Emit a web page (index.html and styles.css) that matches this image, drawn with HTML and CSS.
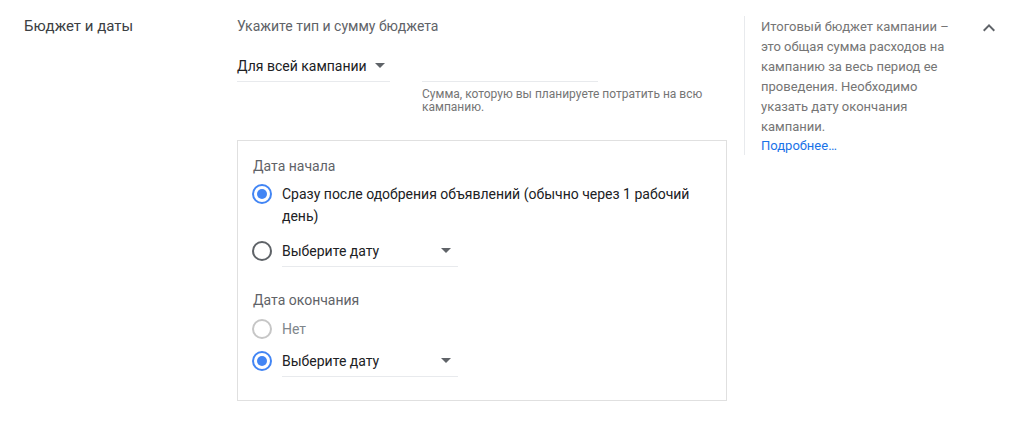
FILE: index.html
```html
<!DOCTYPE html>
<html lang="ru">
<head>
<meta charset="utf-8">
<link rel="stylesheet" href="styles.css">
</head>
<body>
<div class="section">
  <div class="label">Бюджет и даты</div>
  <div class="main">
    <div class="title">Укажите тип и сумму бюджета</div>
    <div class="budget-row">
      <div class="select type-select">
        <span>Для всей кампании</span>
        <span class="arrow"></span>
      </div>
      <div class="amount">
        <div class="amount-input"></div>
        <div class="hint">Сумма, которую вы планируете потратить на всю кампанию.</div>
      </div>
    </div>
    <div class="dates">
      <div class="group-label">Дата начала</div>
      <div class="radio-row multi">
        <span class="radio checked"></span>
        <span class="radio-text">Сразу после одобрения объявлений (обычно через 1 рабочий день)</span>
      </div>
      <div class="radio-row field-row">
        <span class="radio"></span>
        <div class="select date-select">
          <span>Выберите дату</span>
          <span class="arrow"></span>
        </div>
      </div>
      <div class="group-label second">Дата окончания</div>
      <div class="radio-row">
        <span class="radio disabled"></span>
        <span class="radio-text muted">Нет</span>
      </div>
      <div class="radio-row field-row last">
        <span class="radio checked"></span>
        <div class="select date-select">
          <span>Выберите дату</span>
          <span class="arrow"></span>
        </div>
      </div>
    </div>
  </div>
  <div class="help">
    <p>Итоговый бюджет кампании – это общая сумма расходов на кампанию за весь период ее проведения. Необходимо указать дату окончания кампании.</p>
    <a class="more" href="#">Подробнее…</a>
  </div>
  <div class="toggle">
    <svg width="12" height="8" viewBox="0 0 12 8"><path d="M1.4 7.4 6 2.8l4.6 4.6L12 6 6 0 0 6z" fill="#5f6368"/></svg>
  </div>
</div>
</body>
</html>
```
FILE: styles.css
```css
html, body {
  margin: 0;
  padding: 0;
  background: #fff;
  font-family: Roboto, "Noto Sans", Arial, sans-serif;
  color: #202124;
}

.section {
  display: flex;
  align-items: flex-start;
  padding: 16px 0 0 24px;
}

.label {
  width: 213px;
  font-size: 15px;
  line-height: 20px;
  color: #3c4043;
}

.main {
  width: 490px;
}

.title {
  font-size: 14px;
  line-height: 20px;
  color: #5f6368;
}

.budget-row {
  display: flex;
  align-items: flex-start;
  margin-top: 14px;
}

.select {
  display: flex;
  align-items: center;
  justify-content: space-between;
  height: 31px;
  border-bottom: 1px solid #e8eaed;
  font-size: 14px;
  color: #202124;
}

.arrow {
  width: 0;
  height: 0;
  border-left: 5px solid transparent;
  border-right: 5px solid transparent;
  border-top: 5px solid #5f6368;
}

.type-select {
  width: 153px;
  justify-content: flex-start;
  gap: 8px;
}

.amount {
  margin-left: 32px;
}

.amount-input {
  width: 176px;
  height: 31px;
  border-bottom: 1px solid #e8eaed;
}

.hint {
  width: 295px;
  margin-top: 6px;
  font-size: 12px;
  line-height: 13px;
  color: #757575;
}

.dates {
  margin-top: 26px;
  border: 1px solid #e0e0e0;
  padding: 15px 16px 23px 14px;
}

.group-label {
  font-size: 14px;
  line-height: 20px;
  color: #5f6368;
  padding-left: 1px;
}

.group-label.second {
  margin-top: 23px;
}

.radio-row {
  display: flex;
  align-items: center;
  gap: 10px;
  margin-top: 8px;
  font-size: 14px;
  line-height: 22px;
}

.radio-row.multi {
  align-items: flex-start;
  margin-top: 7px;
}

.radio-row.multi .radio {
  margin-top: 1px;
}

.radio-row.field-row {
  margin-top: 8px;
}

.radio-row.field-row.last {
  margin-top: 5px;
}

.radio {
  flex: none;
  width: 20px;
  height: 20px;
  border: 2px solid #5f6368;
  border-radius: 50%;
  box-sizing: border-box;
  position: relative;
}

.radio.checked {
  border-color: #4285f4;
}

.radio.checked::after {
  content: "";
  position: absolute;
  left: 3px;
  top: 3px;
  width: 10px;
  height: 10px;
  border-radius: 50%;
  background: #4285f4;
}

.radio.disabled {
  border-color: #c6c6c6;
}

.radio-text {
  flex: 1;
  color: #202124;
  padding-right: 10px;
}

.radio-text.muted {
  color: #80868b;
}

.date-select {
  width: 176px;
}

.date-select .arrow {
  margin-right: 7px;
}

.help {
  margin-left: 17px;
  border-left: 1px solid #e8eaed;
  padding: 1px 0 0 16px;
  width: 200px;
  height: 138px;
  font-size: 13px;
  line-height: 20px;
  color: #757575;
}

.help p {
  margin: 0;
}

.more {
  display: block;
  color: #1a73e8;
  text-decoration: none;
  line-height: 18px;
}

.toggle {
  margin-left: 22px;
  margin-top: 8px;
  width: 12px;
  height: 8px;
}

.toggle svg {
  display: block;
}
```
